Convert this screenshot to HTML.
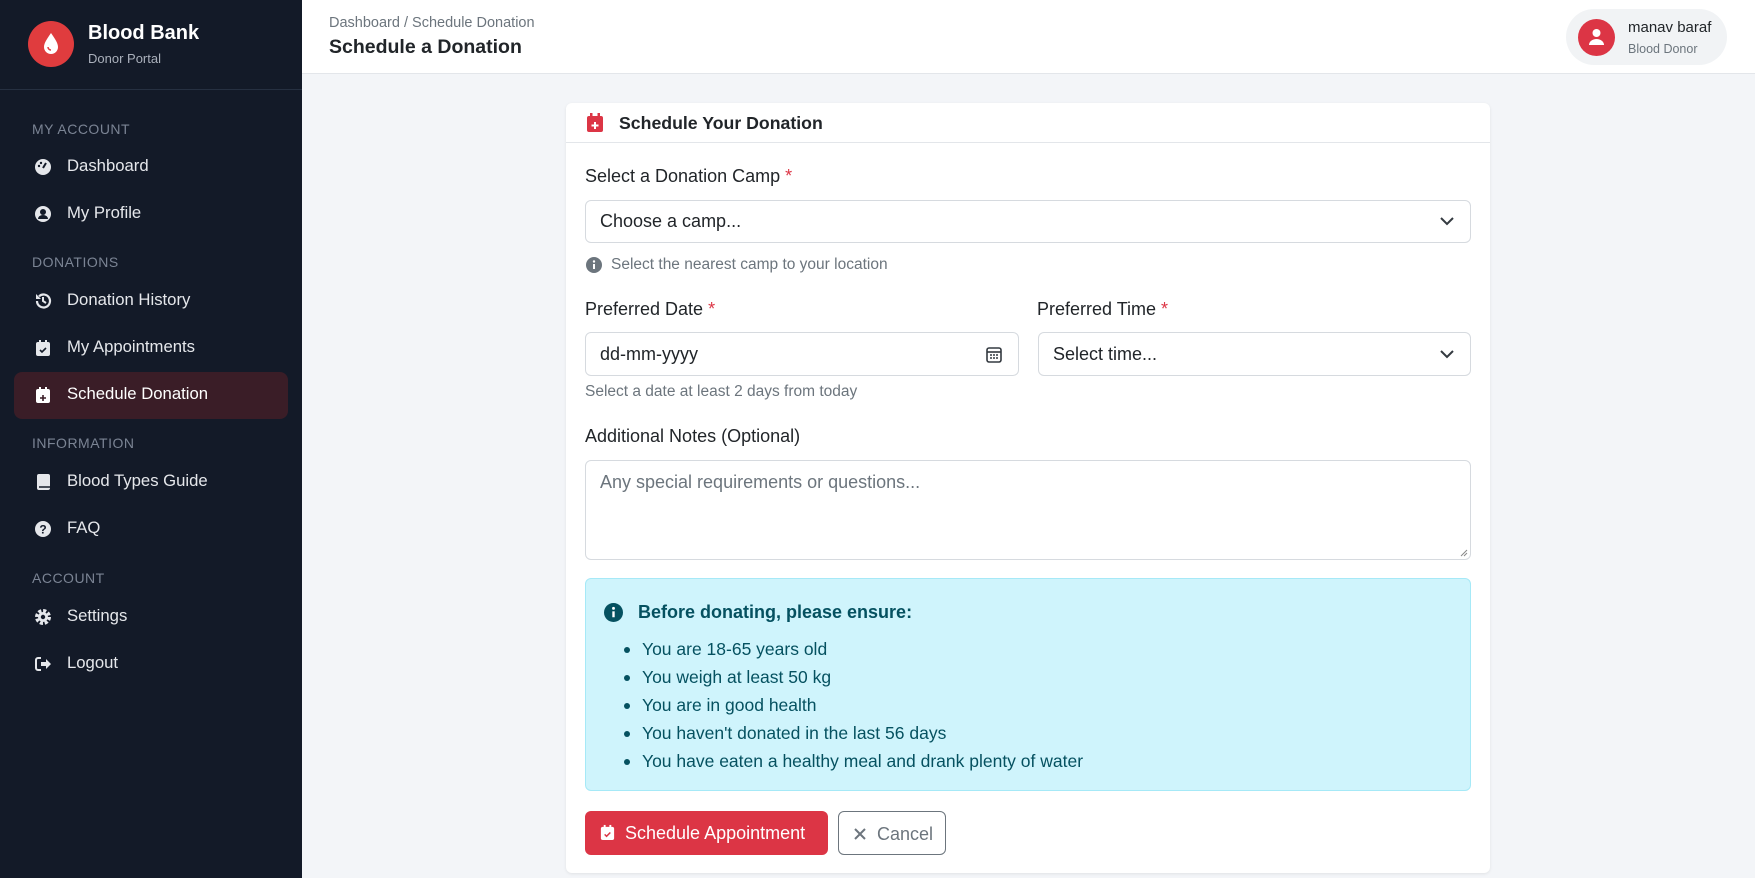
<!DOCTYPE html>
<html><head><meta charset="utf-8"><style>
*{box-sizing:border-box;margin:0;padding:0}
body{width:1755px;height:878px;overflow:hidden;font-family:"Liberation Sans",sans-serif;background:#f3f5f8;position:relative;color:#212529}
.sb{position:absolute;left:0;top:0;width:302px;height:878px;background:#131a28}
.logo{position:absolute;left:28px;top:21px;width:46px;height:46px;border-radius:50%;background:#e03c3e}
.bt{position:absolute;left:88px;top:22px;color:#fff;font-size:20px;font-weight:bold}
.bs{position:absolute;left:88px;top:51px;color:#aab0bb;font-size:13px}
.div{position:absolute;left:0;top:89px;width:302px;height:1px;background:#263041}
.sec{position:absolute;left:32px;color:#7b8494;font-size:14px;letter-spacing:.5px}
.nav{position:absolute;left:67px;color:#e5e7eb;font-size:16.7px}
.ic{position:absolute;left:34px;width:18px;height:18px}
.act{position:absolute;left:14px;top:372px;width:274px;height:47px;border-radius:8px;background:#3a1d27}
.hd{position:absolute;left:302px;top:0;width:1453px;height:74px;background:#fff;border-bottom:1px solid #e3e6ea}
.card{position:absolute;left:566px;top:103px;width:924px;height:770px;background:#fff;border-radius:6px;box-shadow:0 1px 3px rgba(0,0,0,.08)}
.ch{height:40px;border-bottom:1px solid #e3e6ea;position:relative}
.lbl{position:absolute;left:19px;font-size:18px;color:#212529}
.req{color:#dc3545}
.inp{position:absolute;border:1px solid #d6dadf;border-radius:6px;background:#fff;font-size:18px;color:#212529;padding-left:14px;display:flex;align-items:center}
.muted{position:absolute;font-size:15.5px;color:#6c757d}
.alert{position:absolute;left:19px;top:475px;width:886px;height:213px;background:#cff4fc;border:1px solid #a6e9f7;border-radius:6px;color:#055160}
.alert li{position:absolute;left:56px;font-size:17.5px;list-style:none}
.alert li:before{content:"";position:absolute;left:-18px;top:8px;width:6px;height:6px;border-radius:50%;background:#055160}
</style></head><body>
<div class="sb">
<div class="logo"><svg width="46" height="46" viewBox="0 0 46 46"><path d="M23 12 C19 18 16 22 16 26 a7 7 0 0 0 14 0 C30 22 27 18 23 12Z" fill="#fff"/><path d="M20 26 a3 3 0 0 0 3 3" stroke="#e03c3e" stroke-width="1.5" fill="none"/></svg></div>
<div class="bt">Blood Bank</div><div class="bs">Donor Portal</div>
<div class="div"></div>
<div class="sec" style="top:121px">MY ACCOUNT</div>
<svg class="ic" style="top:158px" viewBox="0 0 18 18"><circle cx="9" cy="9" r="8" fill="#e5e7eb"/><path d="M9 10 L12 5" stroke="#131a28" stroke-width="2"/><circle cx="5" cy="8" r="1.2" fill="#131a28"/><circle cx="7" cy="5" r="1.2" fill="#131a28"/></svg>
<div class="nav" style="top:156px">Dashboard</div>
<svg class="ic" style="top:205px" viewBox="0 0 18 18"><circle cx="9" cy="9" r="8" fill="#e5e7eb"/><circle cx="9" cy="7" r="3" fill="#131a28"/><path d="M4 14 a5 4 0 0 1 10 0Z" fill="#131a28"/></svg>
<div class="nav" style="top:203px">My Profile</div>
<div class="sec" style="top:254px">DONATIONS</div>
<svg class="ic" style="top:292px" viewBox="0 0 18 18"><path d="M3 9 a6.5 6.5 0 1 0 2-4.7" stroke="#e5e7eb" stroke-width="2.2" fill="none"/><path d="M2 2 v5 h5" fill="#e5e7eb"/><path d="M9 5 v4 l3 2" stroke="#e5e7eb" stroke-width="2" fill="none"/></svg>
<div class="nav" style="top:290px">Donation History</div>
<svg class="ic" style="top:339px" viewBox="0 0 18 18"><rect x="2" y="3" width="14" height="14" rx="2" fill="#e5e7eb"/><rect x="5" y="1" width="2" height="4" fill="#e5e7eb"/><rect x="11" y="1" width="2" height="4" fill="#e5e7eb"/><path d="M6 11 l2 2 l4-4" stroke="#131a28" stroke-width="1.6" fill="none"/></svg>
<div class="nav" style="top:337px">My Appointments</div>
<div class="act"></div>
<svg class="ic" style="top:386px" viewBox="0 0 18 18"><rect x="2" y="3" width="14" height="14" rx="2" fill="#fff"/><rect x="5" y="1" width="2" height="4" fill="#fff"/><rect x="11" y="1" width="2" height="4" fill="#fff"/><path d="M9 9 v6 M6 12 h6" stroke="#3a1d27" stroke-width="1.6"/></svg>
<div class="nav" style="top:384px;color:#fff">Schedule Donation</div>
<div class="sec" style="top:435px">INFORMATION</div>
<svg class="ic" style="top:473px" viewBox="0 0 18 18"><rect x="3" y="1" width="13" height="16" rx="2" fill="#e5e7eb"/><path d="M5 14 h11" stroke="#131a28" stroke-width="1.5"/></svg>
<div class="nav" style="top:471px">Blood Types Guide</div>
<svg class="ic" style="top:520px" viewBox="0 0 18 18"><circle cx="9" cy="9" r="8" fill="#e5e7eb"/><text x="9" y="13.5" font-size="12" font-weight="bold" text-anchor="middle" fill="#131a28" font-family="Liberation Sans">?</text></svg>
<div class="nav" style="top:518px">FAQ</div>
<div class="sec" style="top:570px">ACCOUNT</div>
<svg class="ic" style="top:608px" viewBox="0 0 18 18"><circle cx="9" cy="9" r="6" fill="none" stroke="#e5e7eb" stroke-width="4" stroke-dasharray="3 1.7"/><circle cx="9" cy="9" r="5" fill="#e5e7eb"/><circle cx="9" cy="9" r="2.2" fill="#131a28"/></svg>
<div class="nav" style="top:606px">Settings</div>
<svg class="ic" style="top:655px" viewBox="0 0 18 18"><path d="M7 3 H4 a2 2 0 0 0-2 2 v8 a2 2 0 0 0 2 2 h3" stroke="#e5e7eb" stroke-width="2" fill="none"/><path d="M7 7 h5 V4 l5 5 l-5 5 v-3 H7Z" fill="#e5e7eb"/></svg>
<div class="nav" style="top:653px">Logout</div>
</div>
<div class="hd">
<div style="position:absolute;left:27px;top:15px;font-size:14.5px;color:#6c757d">Dashboard / Schedule Donation</div>
<div style="position:absolute;left:27px;top:36px;font-size:19.5px;font-weight:bold;color:#212529">Schedule a Donation</div>
<div style="position:absolute;left:1264px;top:9px;width:161px;height:56px;border-radius:28px;background:#f1f3f5">
<div style="position:absolute;left:12px;top:10px;width:37px;height:37px;border-radius:50%;background:#dc3545"><svg width="37" height="37" viewBox="0 0 37 37"><circle cx="18.5" cy="14" r="4" fill="#fff"/><path d="M11 26 a7.5 6 0 0 1 15 0Z" fill="#fff"/></svg></div>
<div style="position:absolute;left:62px;top:10px;font-size:15px;color:#212529">manav baraf</div>
<div style="position:absolute;left:62px;top:33px;font-size:12.5px;color:#6c757d">Blood Donor</div>
</div></div>
<div class="card">
<div class="ch"><svg style="position:absolute;left:20px;top:10px" width="18" height="19" viewBox="0 0 18 19"><rect x="1" y="3" width="16" height="16" rx="2" fill="#dc3545"/><rect x="4" y="0" width="2.5" height="5" fill="#dc3545"/><rect x="11.5" y="0" width="2.5" height="5" fill="#dc3545"/><path d="M9 9 v7 M5.5 12.5 h7" stroke="#fff" stroke-width="2"/></svg>
<div style="position:absolute;left:53px;top:10px;font-size:17.7px;font-weight:bold;color:#212529">Schedule Your Donation</div></div>
<div class="lbl" style="top:63px">Select a Donation Camp <span class="req">*</span></div>
<div class="inp" style="left:19px;top:97px;width:886px;height:43px">Choose a camp...<svg style="position:absolute;right:16px;top:15px" width="14" height="10" viewBox="0 0 14 10"><path d="M1 2 l6 6 l6-6" stroke="#343a40" stroke-width="2" fill="none"/></svg></div>
<svg style="position:absolute;left:20px;top:154px" width="16" height="16" viewBox="0 0 16 16"><circle cx="8" cy="8" r="8" fill="#6c757d"/><rect x="7" y="7" width="2" height="5" fill="#fff"/><circle cx="8" cy="4.5" r="1.2" fill="#fff"/></svg>
<div class="muted" style="left:45px;top:153px">Select the nearest camp to your location</div>
<div class="lbl" style="top:196px">Preferred Date <span class="req">*</span></div>
<div class="lbl" style="left:471px;top:196px">Preferred Time <span class="req">*</span></div>
<div class="inp" style="left:19px;top:229px;width:434px;height:44px">dd-mm-yyyy<svg style="position:absolute;right:16px;top:13px" width="16" height="17" viewBox="0 0 16 17"><rect x="1" y="2" width="14" height="14" rx="2" stroke="#343a40" stroke-width="1.6" fill="none"/><path d="M1 6 h14" stroke="#343a40" stroke-width="1.6"/><path d="M4 9h2M7 9h2M10 9h2M4 12h2M7 12h2M10 12h2" stroke="#343a40" stroke-width="1.4"/></svg></div>
<div class="inp" style="left:472px;top:229px;width:433px;height:44px">Select time...<svg style="position:absolute;right:16px;top:16px" width="14" height="10" viewBox="0 0 14 10"><path d="M1 2 l6 6 l6-6" stroke="#343a40" stroke-width="2" fill="none"/></svg></div>
<div class="muted" style="left:19px;top:280px">Select a date at least 2 days from today</div>
<div class="lbl" style="top:323px">Additional Notes (Optional)</div>
<div class="inp" style="left:19px;top:357px;width:886px;height:100px;align-items:flex-start;padding-top:11px;color:#6c757d">Any special requirements or questions...<svg style="position:absolute;right:2px;bottom:2px" width="8" height="8" viewBox="0 0 8 8"><path d="M1 7 L7 1 M4 7 L7 4" stroke="#888" stroke-width="1"/></svg></div>
<div class="alert">
<svg style="position:absolute;left:18px;top:24px" width="19" height="19" viewBox="0 0 16 16"><circle cx="8" cy="8" r="8" fill="#055160"/><rect x="7" y="7" width="2" height="5" fill="#fff"/><circle cx="8" cy="4.5" r="1.2" fill="#fff"/></svg>
<div style="position:absolute;left:52px;top:23px;font-size:18px;font-weight:bold">Before donating, please ensure:</div>
<ul><li style="top:60px">You are 18-65 years old</li><li style="top:88px">You weigh at least 50 kg</li><li style="top:116px">You are in good health</li><li style="top:144px">You haven't donated in the last 56 days</li><li style="top:172px">You have eaten a healthy meal and drank plenty of water</li></ul>
</div>
<div style="position:absolute;left:19px;top:708px;width:243px;height:44px;background:#dc3545;border-radius:6px;color:#fff;font-size:18px">
<svg style="position:absolute;left:14px;top:12px" width="17" height="19" viewBox="0 0 18 18"><rect x="2" y="3" width="14" height="14" rx="2" fill="#fff"/><rect x="5" y="1" width="2" height="4" fill="#fff"/><rect x="11" y="1" width="2" height="4" fill="#fff"/><path d="M6 11 l2 2 l4-4" stroke="#dc3545" stroke-width="1.6" fill="none"/></svg>
<span style="position:absolute;left:40px;top:12px">Schedule Appointment</span></div>
<div style="position:absolute;left:272px;top:708px;width:108px;height:44px;border:1px solid #6c757d;border-radius:6px;color:#6c757d;font-size:18px">
<svg style="position:absolute;left:15px;top:16px" width="12" height="12" viewBox="0 0 12 12"><path d="M1 1 L11 11 M11 1 L1 11" stroke="#6c757d" stroke-width="2"/></svg>
<span style="position:absolute;left:38px;top:12px">Cancel</span></div>
</div>
</body></html>
